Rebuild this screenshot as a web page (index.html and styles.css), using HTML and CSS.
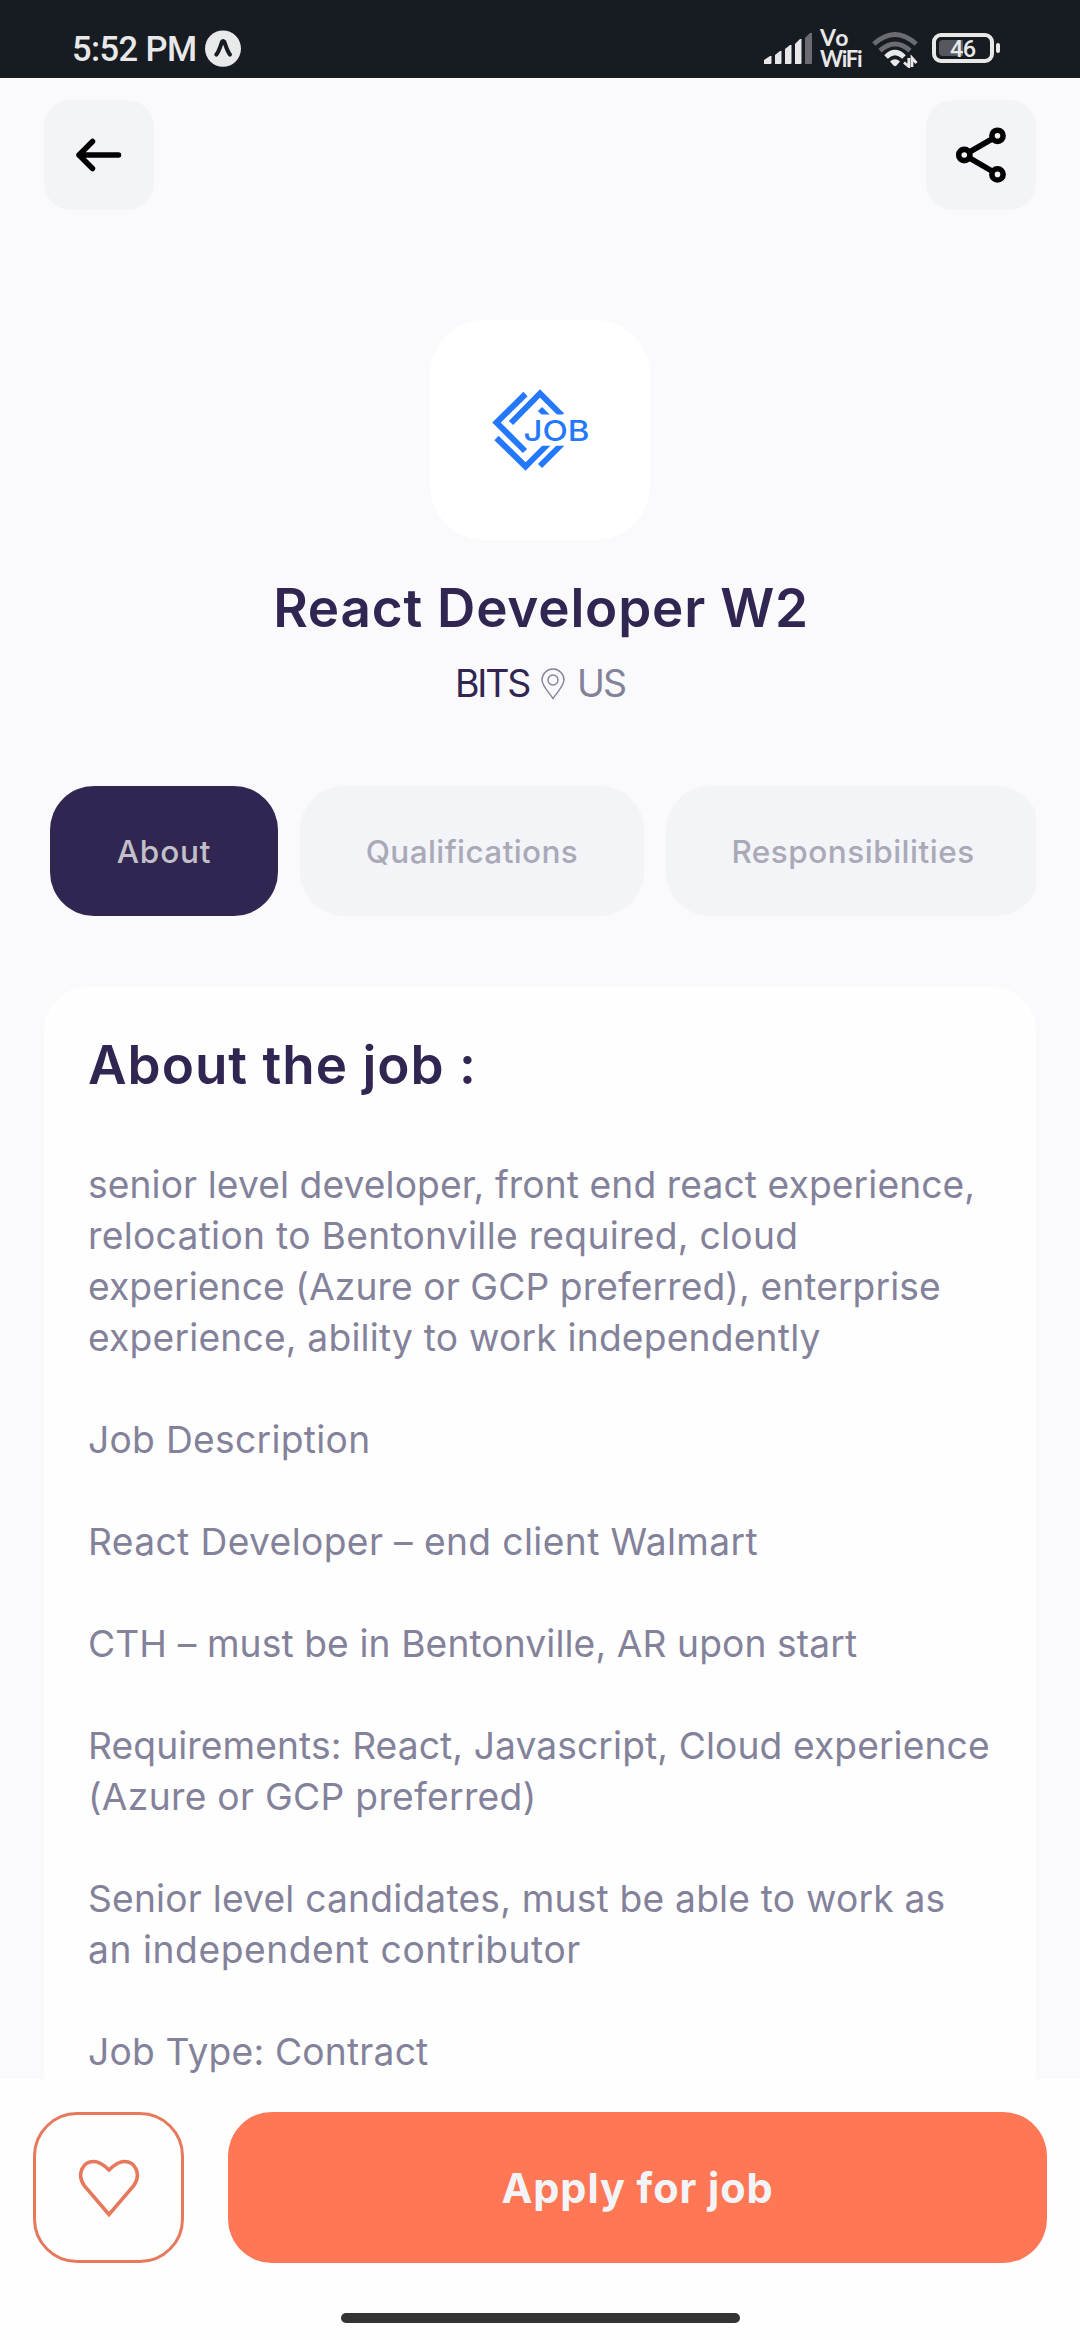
FILE: index.html
```html
<!DOCTYPE html>
<html lang="en">
<head>
<meta charset="utf-8">
<title>React Developer W2</title>
<link rel="stylesheet" href="styles.css">
</head>
<body>
<div class="screen">
  <header class="status">
    <div class="status-left">
      <span class="clock">5:52 PM</span>
      <svg class="app-badge" width="36" height="38" viewBox="0 0 36 38"><ellipse cx="18" cy="18.600" rx="18" ry="18.200" fill="#e8eae9"/><path d="M11.300 24.600C14 21.500 15.600 15.500 16.900 11.800Q18 10.200 19.300 11.800C20.700 15.500 22.300 21.500 25 24.600" fill="none" stroke="#171b22" stroke-width="4" stroke-linecap="round" stroke-linejoin="round"/></svg>
    </div>
    <div class="status-right">
      <svg class="signal" width="48" height="32" viewBox="0 0 48 32" fill="#e8e8e9">
        <path d="M0 31V27L6 23H7.500V30Q7.500 31 6.500 31H1Z"/><path d="M11 31V22L16 18H17.500V30Q17.500 31 16.500 31H12Z"/><path d="M21 31V16L26 12H27.500V30Q27.500 31 26.500 31H22Z"/><path d="M31 31V11L36 6H37.500V30Q37.500 31 36.500 31H32Z"/><path d="M41 31V5L46 0H48V30Q48 31 47 31H42Z" fill="#6a6c71"/>
      </svg>
      <div class="vowifi"><span class="vo">Vo</span><span>WiFi</span></div>
      <svg class="wifi" width="46" height="36" viewBox="0 0 46 36" fill="none">
        <path d="M1.800 12Q23-7 44.200 12" stroke="#6a6c71" stroke-width="4.800"/>
        <path d="M8 18.600Q23 5.200 38 18.600" stroke="#6a6c71" stroke-width="4.800"/>
        <path d="M14 25Q23 16 32 25" stroke="#e8e8e9" stroke-width="5"/>
        <path d="M18 29.500Q23 25 28 29.500L24.500 33.500Q23 35 21.500 33.500Z" fill="#e8e8e9"/>
        <path d="M36.800 26V34.500L32 30.500M40 35V26L44.500 31" stroke="#e8e8e9" stroke-width="2.800"/>
      </svg>
      <div class="battery"><div class="battery-body"><span class="battery-fill"></span><span class="battery-text">46</span></div><span class="battery-tip"></span></div>
    </div>
  </header>

  <main class="page">
    <nav class="topbar">
      <button class="icon-btn"><svg width="110" height="110" viewBox="0 0 110 110" fill="none" stroke="#000" stroke-width="5.500" stroke-linecap="round" stroke-linejoin="round"><path d="M48.500 41.500L35 55L48.500 68.500M35 55H74.500"/></svg></button>
      <button class="icon-btn"><svg width="110" height="110" viewBox="0 0 110 110" fill="none" stroke="#000" stroke-width="5.600"><circle cx="38.300" cy="55" r="5.600"/><circle cx="71.500" cy="35.800" r="5.600"/><circle cx="71.500" cy="74.400" r="5.600"/><path d="M43.500 52L66.500 38.800M43.500 58L66.500 71.400"/></svg></button>
    </nav>

    <section class="company">
      <div class="logo">
        <svg width="220" height="220" viewBox="0 0 220 220">
          <g fill="none" stroke="#2478fb" stroke-width="6">
            <path d="M95.500 74L66.500 102.500L95 131"/>
            <path d="M81 103L110 73.500L132 95.500"/>
            <path d="M66.500 118L95.500 146.500L120 122"/>
            <path d="M110 146L134 122"/>
            <path d="M110 89L118 97"/>
          </g>
          <path d="M108 94.500H136V104H108ZM108 119H138V125.700H108Z" fill="#fff"/>
          <text class="logo-text" x="93.500" y="120.700" textLength="66" lengthAdjust="spacingAndGlyphs">JOB</text>
        </svg>
      </div>
      <h1 class="title">React Developer W2</h1>
      <div class="meta">
        <span class="firm">BITS</span>
        <svg class="pin" width="24" height="32" viewBox="0 0 24 32" fill="none" stroke="#83829a" stroke-width="1.400"><path d="M12 30.500C8 24.500 1 17.500 1 12A11 11 0 0 1 23 12C23 17.500 16 24.500 12 30.500Z"/><circle cx="12" cy="12" r="5"/></svg>
        <span class="place">US</span>
      </div>
    </section>

    <div class="tabs">
      <button class="tab active">About</button>
      <button class="tab tab-mid">Qualifications</button>
      <button class="tab tab-last">Responsibilities</button>
    </div>

    <article class="card">
      <h2 class="card-title">About the job :</h2>
      <div class="copy">
        <p><span class="s1">senior level developer, front end react experience,</span><br><span class="s3">relocation to Bentonville required, cloud</span><br><span class="s1">experience (Azure or GCP preferred), enterprise</span><br><span class="s2">experience, ability to work independently</span></p>
        <p><span class="s3">Job Description</span></p>
        <p><span class="s4">React Developer – end client Walmart</span></p>
        <p><span class="s1">CTH – must be in Bentonville, AR upon start</span></p>
        <p><span class="s1">Requirements: React, Javascript, Cloud experience</span><br><span class="s3">(Azure or GCP preferred)</span></p>
        <p><span class="s2">Senior level candidates, must be able to work as</span><br><span class="s5">an independent contributor</span></p>
        <p><span class="s2">Job Type: Contract</span></p>
      </div>
    </article>
  </main>

  <footer class="footer">
    <div class="actions">
      <button class="like"><svg width="64" height="60" viewBox="0 0 64 60" fill="none" stroke="#e6785c" stroke-width="3.600"><path d="M32 56.500L7.500 28C-1.500 15 7 3.500 16.500 3.500C22 3.500 27 7 32 12C37 7 42 3.500 47.500 3.500C57 3.500 65.500 15 56.500 28Z"/></svg></button>
      <button class="apply">Apply for job</button>
    </div>
    <div class="home-bar"></div>
  </footer>
</div>
</body>
</html>
```
FILE: styles.css
```css
* { box-sizing: border-box; }
body { margin: 0; font-family: Inter, "Open Sans", sans-serif; }
h1, h2, p { margin: 0; }
button { border: 0; padding: 0; font: inherit; }
svg { display: block; flex: none; }

.screen { width: 1080px; height: 2340px; display: flex; flex-direction: column; overflow: hidden; background: #fafafc; }

.status { flex: none; height: 78px; background: #171b22; display: flex; justify-content: space-between; padding: 0 80px 0 72px; color: #e8e8e9; }
.status-left { display: flex; gap: 8px; padding-top: 30px; }
.clock { width: 125px; font: 500 34.500px/38px Roboto, sans-serif; letter-spacing: -.6px; white-space: nowrap; }
.status-right { display: flex; align-items: flex-start; }
.signal { margin-top: 33px; }
.vowifi { width: 44px; margin: 27px 0 0 8px; font: 700 22px/21px Lato, sans-serif; letter-spacing: -1.300px; display: flex; flex-direction: column; white-space: nowrap; }
.vo { font-size: 23px; letter-spacing: 1px; }
.wifi { margin: 32px 0 0 8px; }
.battery { margin: 33px 0 0 14px; display: flex; align-items: center; gap: 2px; }
.battery-body { display: flex; align-items: center; width: 62px; height: 30px; border: 4px solid #e8e8e9; border-radius: 9px; position: relative; }
.battery-fill { width: 24px; height: 16px; margin-left: 3px; border-radius: 4px 0 0 4px; background: #56585d; }
.battery-text { position: absolute; left: 14px; top: 0; font: 500 23.500px/24px Roboto, sans-serif; letter-spacing: -.7px; }
.battery-tip { width: 4px; height: 10px; border-radius: 2px; background: #e8e8e9; }

.page { flex: none; height: 2001px; overflow: hidden; display: flex; flex-direction: column; padding: 22px 44px 0; }
.topbar { display: flex; justify-content: space-between; }
.icon-btn { width: 110px; height: 110px; border-radius: 27px; background: #f3f4f8; }

.company { display: flex; flex-direction: column; align-items: center; padding-top: 110px; }
.logo { width: 220px; height: 220px; border-radius: 55px; background: #fff; }
.logo-text { font: 500 29px Inter, sans-serif; fill: #2478fb; }
.title { margin-top: 33px; height: 71px; padding-left: 2px; font-size: 53px; font-weight: 600; line-height: 70px; letter-spacing: .8px; color: #312651; white-space: nowrap; }
.meta { margin-top: 14px; height: 52px; display: flex; align-items: center; font-size: 37.500px; line-height: 52px; }
.firm { width: 86px; letter-spacing: -2.200px; color: #312651; }
.place { width: 48px; margin-left: 12px; letter-spacing: -1.800px; color: #83829a; }

.tabs { display: flex; gap: 22px; margin-top: 76px; padding-left: 6px; overflow: hidden; }
.tab { flex: none; width: 228px; height: 130px; border-radius: 44px; background: #f3f4f8; color: #aaa9b8; font-size: 31.500px; font-weight: 500; letter-spacing: .8px; }
.tab.active { background: #312651; color: #c1c0c8; }
.tab-mid { width: 344px; letter-spacing: .4px; }
.tab-last { width: 374px; letter-spacing: .5px; }

.card { margin-top: 71px; flex: 1; padding: 42px 44px 0; border-radius: 44px 44px 0 0; background: #fefefe; overflow: hidden; }
.card-title { height: 72px; font-size: 53px; font-weight: 600; line-height: 72px; letter-spacing: 1px; color: #312651; }
.copy { margin-top: 58px; font-size: 37.200px; line-height: 51px; color: #83829a; white-space: nowrap; display: flex; flex-direction: column; gap: 51px; }
.s1 { letter-spacing: .1px; }
.s2 { letter-spacing: .2px; }
.s3 { letter-spacing: .3px; }
.s4 { letter-spacing: .38px; }
.s5 { letter-spacing: .56px; }

.footer { flex: 1; background: #fefefe; padding: 33px 33px 0; display: flex; flex-direction: column; align-items: center; }
.actions { width: 100%; display: flex; gap: 44px; }
.like { width: 151px; height: 151px; border: 3px solid #e6785c; border-radius: 44px; background: none; display: flex; align-items: center; justify-content: center; }
.apply { flex: 1; height: 151px; border-radius: 44px; background: #ff7754; color: #f3f4f8; font-size: 41.500px; font-weight: 700; letter-spacing: .9px; }
.home-bar { width: 399px; height: 10px; margin-top: 50px; border-radius: 5px; background: #333; }
```
